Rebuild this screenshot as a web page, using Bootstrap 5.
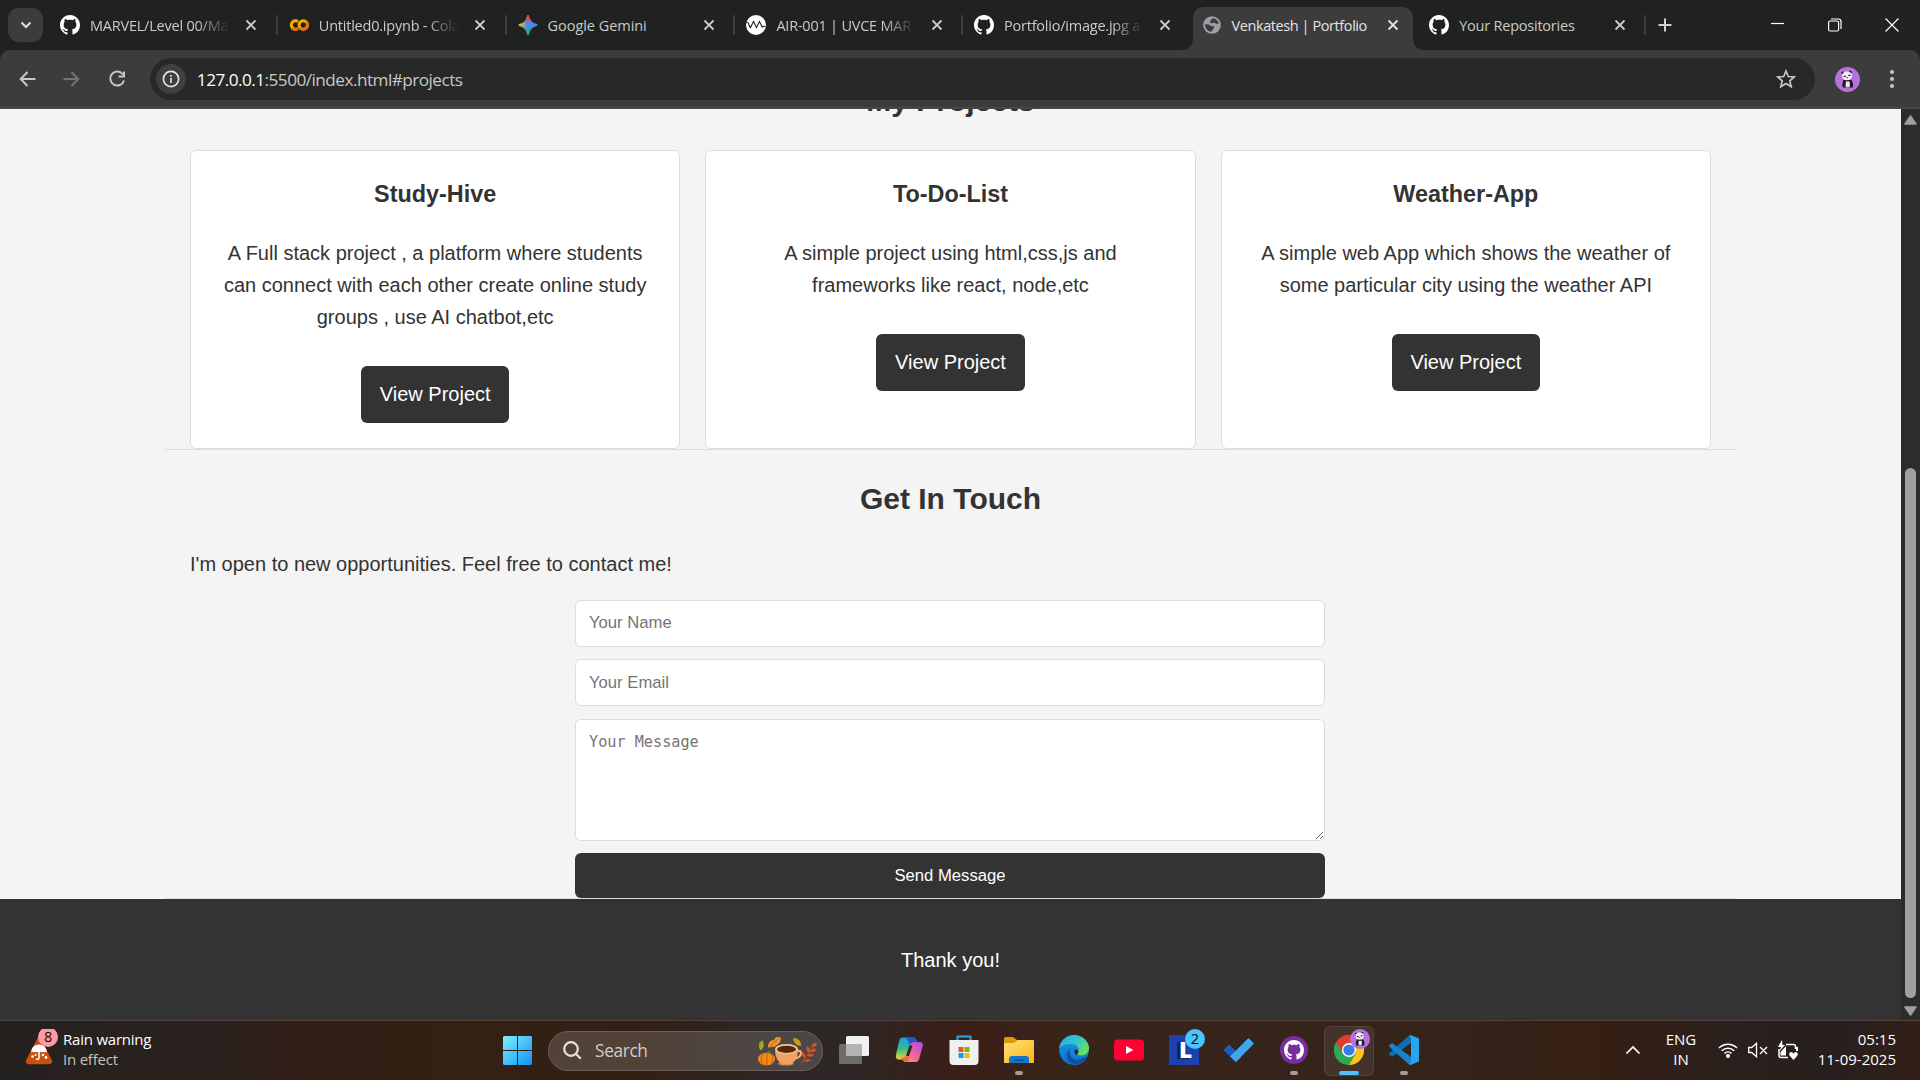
<!DOCTYPE html>
<html lang="en">
<head>
<meta charset="utf-8">
<title>Venkatesh | Portfolio</title>
<link href="https://cdn.jsdelivr.net/npm/bootstrap@5.3.0/dist/css/bootstrap.min.css" rel="stylesheet">
<style>
  :root { --ink: #333; --strip: #202221; --bar: #3c3c3c; --ui: "Open Sans", "Noto Sans", sans-serif; }
  html, body { height: 1080px; overflow: hidden; }
  body { width: 1920px; font-family: var(--ui); background: #f4f4f4; }
  svg { display: block; flex: none; }

  /* tab strip */
  .tabstrip { height: 50px; background: var(--strip); color: #c9cac9; padding-left: 8px; }
  .tab-search { width: 35px; height: 34px; border-radius: 11px; background: var(--bar); margin-right: 5px; }
  .btab { width: 227.6px; height: 34px; padding-left: 12px; position: relative; font-size: 14.5px; letter-spacing: -.22px; }
  .btab:nth-child(-n+4) { width: 228.8px; }
  .btab .fav { width: 20px; height: 20px; margin-right: 10px; }
  .btab .ttl { width: 141px; white-space: nowrap; line-height: 24px; padding-top: 1px; }
  .btab .fade-end { -webkit-mask-image: linear-gradient(90deg, #000 76%, transparent 99%); mask-image: linear-gradient(90deg, #000 76%, transparent 99%); }
  .btab .x { margin-left: 14px; }
  .btab.sep::after { content: ""; position: absolute; right: -1px; top: 7px; width: 2px; height: 20px; background: #3d3f3e; border-radius: 1px; }
  .btab.current { color: #e3e3e3; z-index: 1; letter-spacing: -.42px; }
  .tab-shape { position: absolute; left: -9px; top: -1px; z-index: -1; }
  .win-ctl { width: 57px; }

  /* toolbar */
  .strip-base { background: var(--strip); }
  .toolbar { height: 59px; background: var(--bar); border-radius: 10px 10px 0 0; border-bottom: 2px solid #484646; padding: 8px 0 7px 16px; color: #c7c7c7; }
  .toolbar .nav-ico { width: 24px; margin-right: 21px; margin-left: -.4px; }
  .omnibox { width: 1665px; height: 42px; border-radius: 21px; background: #282828; padding-left: 6px; padding-right: 18px; margin-left: 0; }
  .site-info { width: 30px; height: 30px; border-radius: 50%; background: #3f3f3f; }
  .url { font-size: 17.2px; letter-spacing: -.53px; color: #c7c7c7; margin-left: 11px; line-height: 24px; padding-top: 1px; }
  .url span { color: #fff; }

  /* page */
  .viewport { height: 911px; }
  .page { width: 1901px; background: #f4f4f4; color: var(--ink); font: 20px/1.6 "Liberation Sans", Arial, sans-serif; overflow: hidden; }
  .page section { width: 1571px; margin: 0 auto; padding: 25px 25px 0; border-bottom: 1px solid #ddd; }
  .page .first-sec { margin-top: -57px; }
  .page h2 { font-size: 30px; line-height: 48px; font-weight: 700; text-align: center; margin: 0 0 25px; }
  .project-grid { display: grid; grid-template-columns: repeat(3, 1fr); gap: 25px; }
  .project { background: #fff; border: 1px solid #ddd; border-radius: 6px; padding: 25px; height: 299px; text-align: center; }
  .project h3 { font-size: 23.4px; line-height: 37.4px; font-weight: 700; margin: 0 0 23.4px; }
  .project p { margin: 0 0 33.2px; }
  .view-btn { display: inline-block; background: var(--ink); color: #fff; border-radius: 6px; padding: 12px 18.75px 13px; line-height: 32px; text-decoration: none; vertical-align: top; }
  .contact-form { width: 750px; margin: 20px 0 0 385px; display: flex; flex-direction: column; }
  .contact-form input, .contact-form textarea { border: 1px solid #ddd; border-radius: 6px; padding: 0 13px 2px; font: 16.67px "Liberation Sans", Arial, sans-serif; background: #fff; height: 47px; margin-bottom: 12px; outline: 0; }
  .contact-form input[type=email] { padding-bottom: 0; }
  .contact-form textarea { height: 122px; margin-top: 1px; padding-top: 12px; font: 15.2px/20px "DejaVu Sans Mono", monospace; resize: vertical; }
  .contact-form ::placeholder { color: #757575; opacity: 1; }
  .contact-form button { height: 45px; border: 0; border-radius: 6px; background: var(--ink); color: #fff; font: 16.67px "Liberation Sans", Arial, sans-serif; padding: 0; }
  .page footer { background: var(--ink); color: #fff; height: 122px; text-align: center; padding-top: 45px; }
  .scrollbar { width: 19px; background: #2c2c2c; padding: 6px 0 4px; }
  .thumb { width: 11px; height: 530px; border-radius: 6px; background: #9f9f9f; margin-top: 343px; }

  /* taskbar */
  .taskbar { height: 60px; border-top: 1px solid #4d443f; color: #fff; position: relative; font-size: 15px; line-height: 20px;
    background: linear-gradient(90deg, #25211f 0, #2b211e 220px, #331f16 310px, #342114 480px, #332015 640px, #2c2726 780px, #2d2625 850px, #3b1e17 960px, #38251a 1080px, #35241a 1400px, #361f15 1600px, #2a201d 1730px, #28201e 1840px, #331f17 1920px); }
  .weather { padding-left: 24px; width: 503px; letter-spacing: -.22px; }
  .weather .ico { width: 39px; height: 40px; margin-bottom: 3px; }
  .two-line { padding-bottom: 4px; }
  .tb-search { width: 275px; height: 40px; border-radius: 20px; border: 1px solid #6b5e58; background: #ffffff26; margin: 0 16px; padding: 0 5px 0 14px; color: #d2ccca; font-size: 17.3px; letter-spacing: -.35px; }
  .app { width: 30px; height: 50px; margin-right: 25px; position: relative; }
  .app.run::after { content: ""; position: absolute; bottom: 1px; left: 11px; width: 8px; height: 4px; border-radius: 2px; background: #a69c97; }
  .app.on::before { content: ""; position: absolute; inset: 0 -10px; border-radius: 6px; background: #ffffff12; border: 1px solid #ffffff14; }
  .app.on::after { left: 5px; width: 20px; background: #4cc2ff; }
  .app svg { position: relative; overflow: visible; }
  .app > svg { margin-bottom: 1px; }
  .tray { position: absolute; right: 24px; top: 0; height: 59px; }
  .tray > svg { margin-bottom: 2px; }
</style>
</head>
<body class="d-flex flex-column">
<svg width="0" height="0" class="position-absolute">
  <defs>
    <symbol id="gh" viewBox="0 0 16 16"><path fill="currentColor" d="M8 0C3.58 0 0 3.58 0 8c0 3.54 2.29 6.53 5.47 7.59.4.07.55-.17.55-.38 0-.19-.01-.82-.01-1.49-2.01.37-2.53-.49-2.69-.94-.09-.23-.48-.94-.82-1.13-.28-.15-.68-.52-.01-.53.63-.01 1.08.58 1.23.82.72 1.21 1.87.87 2.33.66.07-.52.28-.87.51-1.07-1.78-.2-3.64-.89-3.64-3.95 0-.87.31-1.59.82-2.15-.08-.2-.36-1.02.08-2.12 0 0 .67-.21 2.2.82.64-.18 1.32-.27 2-.27s1.36.09 2 .27c1.53-1.04 2.2-.82 2.2-.82.44 1.1.16 1.92.08 2.12.51.56.82 1.27.82 2.15 0 3.07-1.87 3.75-3.65 3.95.29.25.54.73.54 1.48 0 1.07-.01 1.93-.01 2.2 0 .21.15.46.55.38A8.01 8.01 0 0 0 16 8c0-4.42-3.58-8-8-8z"/></symbol>
    <symbol id="x" viewBox="0 0 12 12"><path d="M1.5 1.5l9 9M10.5 1.5l-9 9" stroke="currentColor" stroke-width="1.8" fill="none"/></symbol>
    <symbol id="panda" viewBox="0 0 24 24"><circle cx="12" cy="12" r="12" fill="#b870e0"/><path d="M8 12.500h8l1.500 4-.5 3.200h-3.500l-.7-3h-1.200l-.6 3H7.400L7 16.500z" fill="#1d1a20"/><path d="M10.500 14h3.500l.3 5h-4.200z" fill="#f2eef4"/><circle cx="7.300" cy="5.600" r="1.200" fill="#1d1a20"/><circle cx="14.800" cy="4.700" r="1.200" fill="#1d1a20"/><ellipse cx="11.500" cy="8.500" rx="4.900" ry="4.200" fill="#f2eef4"/><path d="M8.300 9.300l2-.6M12.800 8.300l2-.5" stroke="#1d1a20" stroke-width="1.300"/><circle cx="11.800" cy="10.300" r=".6" fill="#1d1a20"/></symbol>
    <linearGradient id="win" x1="0" y1="0" x2="1" y2="1"><stop offset="0" stop-color="#7ff0fd"/><stop offset="1" stop-color="#0e92f6"/></linearGradient>
    <linearGradient id="fold" x1="0" y1="0" x2="1" y2="1"><stop offset="0" stop-color="#ffe07a"/><stop offset="1" stop-color="#f9b816"/></linearGradient>
    <linearGradient id="ed1" x1="0" y1="0" x2="1" y2=".6"><stop offset="0" stop-color="#27a9e8"/><stop offset=".6" stop-color="#35c8c0"/><stop offset="1" stop-color="#6be05a"/></linearGradient>
    <linearGradient id="ed2" x1="0" y1="0" x2="0" y2="1"><stop offset="0" stop-color="#1a9de6"/><stop offset="1" stop-color="#0b6fd0"/></linearGradient>
    <linearGradient id="cp1" x1="0" y1="0" x2="0" y2="1"><stop offset="0" stop-color="#1e9bf0"/><stop offset=".5" stop-color="#35b98a"/><stop offset="1" stop-color="#f3d32a"/></linearGradient>
    <linearGradient id="cp2" x1="1" y1="0" x2="0" y2="1"><stop offset="0" stop-color="#a94be8"/><stop offset=".5" stop-color="#ee5fa5"/><stop offset="1" stop-color="#ffa24a"/></linearGradient>
    <linearGradient id="gem" x1="0" y1="0" x2="1" y2="0"><stop offset="0" stop-color="#f6bd1c"/><stop offset=".45" stop-color="#4a8bf5"/><stop offset="1" stop-color="#3f86ff"/></linearGradient>
    <linearGradient id="gem2" x1="0" y1="0" x2="0" y2="1"><stop offset="0" stop-color="#f04438"/><stop offset=".42" stop-color="#f04438" stop-opacity="0"/><stop offset=".6" stop-color="#22b45a" stop-opacity="0"/><stop offset="1" stop-color="#22b45a"/></linearGradient>
  </defs>
</svg>

<header class="tabstrip d-flex align-items-center">
  <div class="tab-search d-flex align-items-center justify-content-center"><svg width="12" height="8" viewBox="0 0 12 8"><path d="M1.500 1.500L6 6l4.500-4.500" fill="none" stroke="#e0e0e0" stroke-width="2"/></svg></div>
  <div class="btab sep d-flex align-items-center"><svg class="fav text-white"><use href="#gh"/></svg><div class="ttl fade-end">MARVEL/Level 00/Ma</div><svg class="x" width="12" height="12"><use href="#x"/></svg></div>
  <div class="btab sep d-flex align-items-center"><svg class="fav" viewBox="0 0 20 20" fill="none" stroke-width="3"><circle cx="14.300" cy="10" r="4.200" stroke="#f9ab00"/><path d="M9 6.600A4.200 4.200 0 1 0 9 13.400" stroke="#f9ab00"/><path d="M3 13.200a4.200 4.200 0 0 0 6 0M11.200 13a4.200 4.200 0 0 0 6-6" stroke="#e8710a"/></svg><div class="ttl fade-end">Untitled0.ipynb - Cola</div><svg class="x" width="12" height="12"><use href="#x"/></svg></div>
  <div class="btab sep d-flex align-items-center"><svg class="fav" viewBox="0 0 20 20"><path d="M10 1Q11.500 8.500 18.500 10 11.500 11.500 10 19 8.500 11.500 1.500 10 8.500 8.500 10 1z" fill="url(#gem)" stroke="url(#gem)" stroke-width="1.800" stroke-linejoin="round"/><path d="M10 1Q11.500 8.500 18.500 10 11.500 11.500 10 19 8.500 11.500 1.500 10 8.500 8.500 10 1z" fill="url(#gem2)" stroke="url(#gem2)" stroke-width="1.800" stroke-linejoin="round"/></svg><div class="ttl" style="letter-spacing:-.05px">Google Gemini</div><svg class="x" width="12" height="12"><use href="#x"/></svg></div>
  <div class="btab sep d-flex align-items-center"><svg class="fav" viewBox="0 0 20 20"><circle cx="10" cy="10" r="10" fill="#fff"/><path d="M.5 7.500q1.500-1 2.200 1.500T4.500 12.500L7.500 6.500l3 6 3-6 2.700 5.500q1.200-.5 3-1" fill="none" stroke="#202221" stroke-width="1.100"/></svg><div class="ttl fade-end">AIR-001 | UVCE MAR</div><svg class="x" width="12" height="12"><use href="#x"/></svg></div>
  <div class="btab d-flex align-items-center"><svg class="fav text-white"><use href="#gh"/></svg><div class="ttl fade-end">Portfolio/image.jpg a</div><svg class="x" width="12" height="12"><use href="#x"/></svg></div>
  <div class="btab current d-flex align-items-center">
    <svg class="tab-shape" width="244" height="43" viewBox="0 0 244 43"><path d="M0 43q12 0 12-12V12Q12 0 24 0h196q12 0 12 12v19q0 12 12 12z" fill="#3c3c3c"/></svg>
    <svg class="fav" viewBox="0 0 20 20"><circle cx="10" cy="10" r="8.800" fill="#9aa0a6"/><path d="M11 3.200a7 7 0 0 1 5.800 5.200q-2 .8-3.300-.2T10.200 8 8 6.200q.5-1.600 3-3zM3 9.500q3.500-.5 5 .8t3.500.7q1.500 1.200.2 2.500T9.500 16.800A7 7 0 0 1 3 9.500z" fill="#3c3c3c"/></svg><div class="ttl">Venkatesh | Portfolio</div><svg class="x" width="12" height="12"><use href="#x"/></svg></div>
  <div class="btab sep d-flex align-items-center"><svg class="fav text-white"><use href="#gh"/></svg><div class="ttl">Your Repositories</div><svg class="x" width="12" height="12"><use href="#x"/></svg></div>
  <svg width="14" height="14" viewBox="0 0 14 14" style="margin-left:13px"><path d="M7 .5v13M.5 7h13" stroke="#d0d0d0" stroke-width="2"/></svg>
  <div class="d-flex ms-auto text-white">
    <div class="win-ctl d-flex justify-content-center"><svg width="14" height="14"><path d="M0 5.500h13" stroke="#fff" stroke-width="1.200"/></svg></div>
    <div class="win-ctl d-flex justify-content-center"><svg width="14" height="14" fill="none" stroke="#fff" stroke-width="1.200"><rect x=".6" y="3" width="10" height="10" rx="1.500"/><path d="M3 1h7.500Q13 1 13 3.500V11"/></svg></div>
    <div class="win-ctl d-flex justify-content-center"><svg width="14" height="14" fill="none" stroke="#fff" stroke-width="1.200"><path d="M.5.5l13 13M13.500.5l-13 13"/></svg></div>
  </div>
</header>

<div class="strip-base">
  <div class="toolbar d-flex align-items-center">
    <svg class="nav-ico" height="24" viewBox="0 0 24 24" fill="none" stroke="currentColor" stroke-width="2"><path d="M19.500 12H5M11.500 5L4.700 12l6.800 7"/></svg>
    <svg class="nav-ico" height="24" viewBox="0 0 24 24" fill="none" stroke="#737373" stroke-width="2"><path d="M3.500 12H18M11.500 5l6.800 7-6.800 7"/></svg>
    <svg class="nav-ico" height="24" viewBox="0 0 24 24" fill="none" stroke="currentColor" stroke-width="2"><path d="M18 7.500A7 7 0 1 0 19 13.500M19 4.500v5h-5.500"/></svg>
    <div class="omnibox d-flex align-items-center">
      <div class="site-info d-flex align-items-center justify-content-center"><svg width="18" height="18" viewBox="0 0 18 18" fill="none" stroke="#e3e3e3"><circle cx="9" cy="9" r="7.600" stroke-width="1.700"/><path d="M9 8v5M9 5v1.800" stroke-width="1.700"/></svg></div>
      <div class="url"><span>127.0.0.1</span>:5500/index.html#projects</div>
      <svg class="ms-auto" width="22" height="22" viewBox="0 0 22 22"><path d="M11 3l2.300 5.500 6 .5-4.500 3.900 1.400 5.800L11 15.600l-5.200 3.100 1.400-5.800L2.700 9l6-.5z" fill="none" stroke="#c7c7c7" stroke-width="1.700"/></svg>
    </div>
    <svg width="25" height="25" style="margin-left:20px"><use href="#panda"/></svg>
    <svg width="6" height="20" viewBox="0 0 6 20" style="margin-left:29px" fill="#c7c7c7"><circle cx="3" cy="3" r="2"/><circle cx="3" cy="10" r="2"/><circle cx="3" cy="17" r="2"/></svg>
  </div>
</div>

<div class="viewport d-flex">
  <main class="page">
    <section class="first-sec">
      <h2>My Projects</h2>
      <div class="project-grid">
        <div class="project"><h3>Study-Hive</h3><p>A Full stack project , a platform where students can connect with each other create online study groups , use AI chatbot,etc</p><a class="view-btn">View Project</a></div>
        <div class="project"><h3>To-Do-List</h3><p>A simple project using html,css,js and frameworks like react, node,etc</p><a class="view-btn">View Project</a></div>
        <div class="project"><h3>Weather-App</h3><p>A simple web App which shows the weather of some particular city using the weather API</p><a class="view-btn">View Project</a></div>
      </div>
    </section>
    <section>
      <h2>Get In Touch</h2>
      <p class="m-0">I'm open to new opportunities. Feel free to contact me!</p>
      <form class="contact-form">
        <input type="text" placeholder="Your Name">
        <input type="email" placeholder="Your Email">
        <textarea placeholder="Your Message"></textarea>
        <button type="button">Send Message</button>
      </form>
    </section>
    <footer>Thank you!</footer>
  </main>
  <div class="scrollbar d-flex flex-column align-items-center">
    <svg width="13" height="10" viewBox="0 0 13 10"><path d="M6.500 1L12 9H1z" fill="#9f9f9f" stroke="#9f9f9f" stroke-linejoin="round" stroke-width="1.500"/></svg>
    <div class="thumb mb-auto"></div>
    <svg width="13" height="10" viewBox="0 0 13 10"><path d="M6.500 9L12 1H1z" fill="#9f9f9f" stroke="#9f9f9f" stroke-linejoin="round" stroke-width="1.500"/></svg>
  </div>
</div>

<div class="taskbar d-flex align-items-center">
  <div class="weather d-flex align-items-center">
    <svg class="ico" viewBox="0 0 39 40"><path d="M15 9L3.500 31Q2 34 5 34h20q3 0 1.500-3z" fill="#ca5010" stroke="#ca5010" stroke-width="2.500" stroke-linejoin="round"/><path d="M7 24q0-8 8-8.500 7.500.5 8 8-1.300-1.500-2.700 0-1.300-1.500-2.600 0-1.300-1.500-2.700 0-1.300-1.500-2.700 0-1.300-1.500-2.600 0-1.300-1.500-2.700.5z" fill="#fff"/><path d="M15 23v6q-.3 2-3 1" fill="none" stroke="#fff" stroke-width="1.500"/><g fill="#fff"><circle cx="8.500" cy="27.500" r="1.300"/><circle cx="11.500" cy="26" r="1"/><circle cx="19" cy="26" r="1.300"/><circle cx="22" cy="28.500" r="1.400"/></g><circle cx="24" cy="8" r="10" fill="#ff99a4"/><text x="24" y="13.200" font-size="14.500" text-anchor="middle" fill="#111">8</text></svg>
    <div class="two-line"><div>Rain warning</div><div style="color:#c5c0be">In effect</div></div>
  </div>
  <svg width="29" height="29" viewBox="0 0 29 29"><path d="M1 0h13v14H0V1zM15 0h13l1 1v13H15zM0 15h14v14H1l-1-1zM15 15h14v13l-1 1H15z" fill="url(#win)"/></svg>
  <div class="tb-search d-flex align-items-center">
    <svg width="19" height="19" viewBox="0 0 19 19" fill="none" stroke="#e6e2e0" stroke-width="2.200"><circle cx="8" cy="8" r="6.800"/><path d="M12.800 12.800l5 5"/></svg>
    <span style="margin-left:13px">Search</span>
    <svg class="ms-auto" width="60" height="30" viewBox="0 0 60 30">
      <path d="M3 14Q0 8 5 4q4 5-.5 10z" fill="#a6a31c"/><path d="M11 12q0-8 6-8l2-3 5 .5-1 5-5 4q-4 0-7 1.500z" fill="#f59327"/><path d="M11 12L21 3" stroke="#b85c10"/><path d="M36 2q8 0 8 8-7 0-8-8z" fill="#c79a16"/>
      <path d="M10 18q1-3 3-2" stroke="#6c7a1d" stroke-width="1.800" fill="none"/><ellipse cx="9.500" cy="23" rx="8.500" ry="6.300" fill="#f08a1b"/><path d="M6 17.500q-4 5.500 0 11M10 17v12M14 17.500q3.500 5.500 0 11" fill="none" stroke="#c85f0c"/>
      <path d="M39 15q6-1 5 3t-8 5" fill="none" stroke="#f2b27a" stroke-width="2.200"/><ellipse cx="29" cy="27.500" rx="8" ry="2" fill="#d98a4a"/><path d="M18 13h23q0 13-8 15h-7q-8-2-8-15z" fill="#efa263"/><ellipse cx="29.500" cy="13" rx="11.500" ry="5" fill="#f7c491"/><ellipse cx="29.500" cy="13.300" rx="9.500" ry="3.600" fill="#54280c"/>
      <path d="M45 27Q51 19 55 10" stroke="#b8431c" fill="none" stroke-width="1.300"/><path d="M55 11q0-5 5-4-1 5-5 4zM52 17q-4-3-2-7 4 2 2 7zM53 16q2-5 6-3-1 4-6 3zM48 22q-4-2-3-6 4 1 3 6zM50 20q3-4 7-1-2 3-7 1zM47 25q3-3 7-1-2 3-7 1z" fill="#dc5427"/>
    </svg>
  </div>
  <div class="app d-flex align-items-center"><svg width="30" height="30" viewBox="0 0 30 30"><rect x="7" y="1" width="23" height="20" rx="1.500" fill="#f2f2f2"/><rect x="0" y="9" width="23" height="20" rx="1.500" fill="#6f6d6c"/><path d="M7 9h16v12H7z" fill="#b5b4b3"/></svg></div>
  <div class="app d-flex align-items-center"><svg width="30" height="30" viewBox="0 0 30 30"><path d="M8 2.500h11q3 0 4 4l-6 1-4 14q-1 3-4 3H5q-4 0-3-5l3-13Q6 2.500 8 2.500z" fill="url(#cp1)"/><path d="M12 2.500h7q3 0 4 4.500h-4q-3 0-4 3Q14 4 12 2.500z" fill="#1759d6"/><path d="M22 27H11.500q-2.500 0-3.500-5l2.500-.5q2 0 3-3L16 11q1-4 4-4h6q3.500 0 2.700 4l-3 11q-1 5-3.700 5z" fill="url(#cp2)"/><path d="M15.500 10.500h3l-3.500 10.500h-3z" fill="#2f2422"/><path d="M7.500 22.500q3 1 4.500-1h3.500q-1 5.500-3.500 5.500-3.500 0-4.500-4.500z" fill="#f2643c"/></svg></div>
  <div class="app d-flex align-items-center"><svg width="30" height="30" viewBox="0 0 30 30"><path d="M8.500 6V1.500h13V6" fill="none" stroke="#2aa7e8" stroke-width="2"/><path d="M.5 5h29v21q0 4-4 4h-21q-4 0-4-4z" fill="#f0f0f0"/><path d="M9.500 12h5v5h-5z" fill="#f25022"/><path d="M15.500 12h5v5h-5z" fill="#7fba00"/><path d="M9.500 18h5v5h-5z" fill="#00a4ef"/><path d="M15.500 18h5v5h-5z" fill="#ffb900"/></svg></div>
  <div class="app run d-flex align-items-center"><svg width="30" height="30" viewBox="0 0 30 30"><path d="M0 3.500Q0 2 1.500 2H9l4 3h6v8H0z" fill="#dd9a06"/><path d="M0 8h10l4-3h15q1 0 1 1v21q0 1-1 1H1q-1 0-1-1z" fill="url(#fold)"/><path d="M5 28v-4q0-3 3-3h14q3 0 3 3v4z" fill="#1377cf"/><path d="M10 25.300h10" stroke="#0a4e94" stroke-width="1.500"/></svg></div>
  <div class="app d-flex align-items-center"><svg width="30" height="30" viewBox="0 0 30 30"><circle cx="15" cy="15" r="14.800" fill="url(#ed2)"/><path d="M0 14C1 5 8 0 15 0c9 0 15 7 15 13 0 5-4 7.500-8 7.500-3 0-4-1.500-3-2.500 3-4-1-9-7-9-7 0-12 3-12 5z" fill="url(#ed1)"/><path d="M10 14.500q-2 8 4 12 6 3 13-2.500Q22 31 14 30 6 27 6.500 19q.5-3 3.500-4.500z" fill="#0c6cc0"/><path d="M12.500 12.500q-4 5 0 10t14-.5q2-.5 1 1-5 7-12 6.500-7-2.500-6.500-10 .5-5 3.500-7z" fill="#124f98"/><path d="M18 20.300q-4-2.500-2-6 4 .5 3 3.500-1.500 1.500-1 2.500z" fill="#2f241d"/></svg></div>
  <div class="app d-flex align-items-center"><svg width="30" height="30" viewBox="0 0 30 30"><rect y="4.500" width="30" height="21" rx="4" fill="#ff0033"/><path d="M12 11l7.500 4-7.500 4z" fill="#fff"/></svg></div>
  <div class="app d-flex align-items-center"><svg width="30" height="30" viewBox="0 0 30 30"><path d="M0 0h30v30H0z" fill="#1e40af"/><path d="M8 24V8l4-2v14h8v4z" fill="#0e2a55"/><text x="10" y="23" font-family="Open Sans" font-weight="800" font-size="22.500" fill="#fff">L</text><circle cx="26" cy="4" r="10" fill="#4cc2ff"/><text x="26" y="9.200" font-size="14.500" text-anchor="middle" fill="#111">2</text></svg></div>
  <div class="app d-flex align-items-center"><svg width="30" height="30" viewBox="0 0 30 30"><path d="M5 10l12 12-5 5L0 15z" fill="#1b5cbe" stroke="#1b5cbe" stroke-linejoin="round"/><path d="M24.500 3.500L29.500 8.500 12 26.500l-5.500-5z" fill="#41a5ee" stroke="#41a5ee" stroke-linejoin="round"/></svg></div>
  <div class="app run d-flex align-items-center"><svg width="30" height="30" viewBox="0 0 30 30"><circle cx="15" cy="15" r="14" fill="#7a2ca0"/><svg x="5" y="5" width="20" height="20" color="#fff"><use href="#gh"/></svg></svg></div>
  <div class="app run on d-flex align-items-center"><svg width="30" height="30" viewBox="0 0 30 30"><circle cx="15" cy="15" r="15" fill="#2da94f"/><path d="M2 7.500A15 15 0 0 1 28 7.500L15 8.500 9 18z" fill="#e33b2e"/><path d="M28 7.500A15 15 0 0 1 15 30l7-11.500L21 7.500z" fill="#fdc413"/><path d="M2 7.500L9 19l6 3-4 7.500A15 15 0 0 1 2 7.500z" fill="#2da94f"/><circle cx="15" cy="15" r="7" fill="#fff"/><circle cx="15" cy="15" r="5.600" fill="#3a7bec"/><svg x="16" y="-6" width="20" height="20"><use href="#panda"/></svg></svg></div>
  <div class="app run d-flex align-items-center"><svg width="30" height="30" viewBox="0 0 30 30"><path d="M22 0v8L3 22l-3-2.500v-1L20 .5z" fill="#0d6fb3"/><path d="M0 10.500L3 8l19 14v8l-2-.5L0 11.500z" fill="#1484cf"/><path d="M21.500 0L30 3.500v23L21.500 30q-1 0-1-1L22 27V3L20.500 1z" fill="#27a5ef"/></svg></div>

  <div class="tray d-flex align-items-center">
    <svg width="16" height="10" viewBox="0 0 16 10" style="margin-right:17px"><path d="M1.500 8.500L8 2l6.500 6.500" fill="none" stroke="#fff" stroke-width="1.700"/></svg>
    <div class="text-center two-line" style="width:46px;margin-right:14px"><div>ENG</div><div>IN</div></div>
    <svg width="20" height="17" viewBox="0 0 20 17" fill="none" stroke="#fff" stroke-width="1.500"><path d="M1 7a12.500 12.500 0 0 1 18 0M3.700 9.800a9 9 0 0 1 12.600 0M6.500 12.500a5 5 0 0 1 7 0"/><circle cx="10" cy="15" r="1.300" fill="#fff"/></svg>
    <svg width="20" height="16" viewBox="0 0 20 16" fill="none" stroke="#fff" stroke-width="1.300" style="margin-left:10px"><path d="M.7 5.500h3L8.500 1.300v13.400L3.700 10.500h-3zM12 5l7 7M19 5l-7 7"/></svg>
    <svg width="22" height="20" viewBox="0 0 22 20" style="margin-left:9px"><path d="M9 4.500h7.500q2 0 2 2V9M2 9v6.500q0 2 2 2h7" fill="none" stroke="#fff" stroke-width="1.500"/><path d="M5 0L1 7h3L2.500 11 8 5H5.500zM3.500 15.500V12L9 6v9.500zM19 7h2v4h-2z" fill="#fff"/><path d="M16.500 20l-4-4.500q-1-3 1.500-3.500 1.500 0 2.500 1.500 1-1.500 2.500-1.500 2.500.5 1.500 3.500z" fill="#fff"/></svg>
    <div class="text-end two-line" style="width:97px"><div>05:15</div><div>11-09-2025</div></div>
  </div>
</div>
<script src="https://cdn.jsdelivr.net/npm/bootstrap@5.3.0/dist/js/bootstrap.bundle.min.js"></script>
</body>
</html>
